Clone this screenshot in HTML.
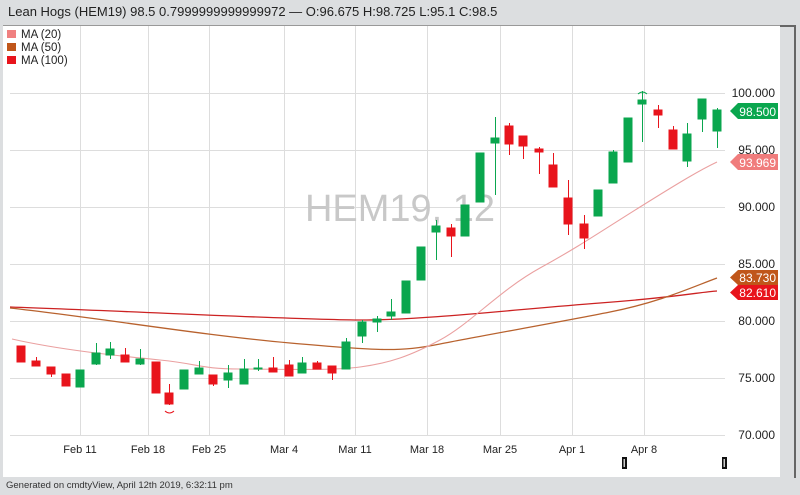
<!DOCTYPE html>
<html><head><meta charset="utf-8"><style>
body{margin:0;width:800px;height:495px;background:#dcdee0;font-family:"Liberation Sans",sans-serif;overflow:hidden;position:relative}
.t{position:absolute;left:8px;top:4px;font-size:13px;color:#222}
.f{position:absolute;left:6px;top:480px;font-size:9.5px;color:#333}
.p{position:absolute;left:3px;top:25px;width:777px;height:451px;background:#fff;border-top:1px solid #999}
.s{position:absolute;left:780px;top:25px;width:14px;height:451px;background:#dcdee0;border-right:2px solid #666;border-top:2px solid #666}
svg{position:absolute;left:0;top:0}
</style></head><body>
<div class="t">Lean Hogs (HEM19) 98.5 0.7999999999999972 — O:96.675 H:98.725 L:95.1 C:98.5</div>
<div class="p"></div><div class="s"></div>
<div class="f">Generated on cmdtyView, April 12th 2019, 6:32:11 pm</div>
<svg width="800" height="495" font-family="Liberation Sans, sans-serif">
<g stroke="#ddd" stroke-width="1">
<line x1="80.5" y1="26" x2="80.5" y2="435"/><line x1="148.5" y1="26" x2="148.5" y2="435"/><line x1="209.5" y1="26" x2="209.5" y2="435"/><line x1="284.5" y1="26" x2="284.5" y2="435"/><line x1="355.5" y1="26" x2="355.5" y2="435"/><line x1="427.5" y1="26" x2="427.5" y2="435"/><line x1="500.5" y1="26" x2="500.5" y2="435"/><line x1="572.5" y1="26" x2="572.5" y2="435"/><line x1="644.5" y1="26" x2="644.5" y2="435"/>
<line x1="10" y1="93.5" x2="725" y2="93.5"/><line x1="10" y1="150.5" x2="725" y2="150.5"/><line x1="10" y1="207.5" x2="725" y2="207.5"/><line x1="10" y1="264.5" x2="725" y2="264.5"/><line x1="10" y1="321.5" x2="725" y2="321.5"/><line x1="10" y1="378.5" x2="725" y2="378.5"/><line x1="10" y1="435.5" x2="725" y2="435.5"/>
</g>
<text x="400" y="221" font-size="38" fill="#c8c8c8" text-anchor="middle">HEM19, 12</text>
<g font-size="12" fill="#222" text-anchor="end">
<text x="775" y="97">100.000</text><text x="775" y="154">95.000</text><text x="775" y="211">90.000</text><text x="775" y="268">85.000</text><text x="775" y="325">80.000</text><text x="775" y="382">75.000</text><text x="775" y="439">70.000</text>
</g>
<g font-size="11" fill="#222" text-anchor="middle">
<text x="80" y="453">Feb 11</text><text x="148" y="453">Feb 18</text><text x="209" y="453">Feb 25</text><text x="284" y="453">Mar 4</text><text x="355" y="453">Mar 11</text><text x="427" y="453">Mar 18</text><text x="500" y="453">Mar 25</text><text x="572" y="453">Apr 1</text><text x="644" y="453">Apr 8</text>
</g>
<rect x="622" y="457" width="5" height="12" fill="#111"/><rect x="623.5" y="459" width="1.5" height="8" fill="#ccc"/>
<rect x="722" y="457" width="5" height="12" fill="#111"/><rect x="723.5" y="459" width="1.5" height="8" fill="#ccc"/>
<g fill="none" stroke-width="1.3">
<path d="M10,307 C150,312 300,320 362,320 S520,309 600,303 S700,292 717,291" stroke="#cc2222"/>
<path d="M10,308 C100,318 200,335 290,343 S400,352 440,344 S560,322 610,312 S690,288 717,278" stroke="#b8622e"/>
<path d="M12,339 C60,350 120,356 160,360 S200,369 240,369 S330,371 360,367 S410,356 440,340 S500,290 540,268 S600,232 640,207 S700,170 717,162" stroke="#eaa0a0" stroke-width="1.1"/>
</g>
<g stroke-width="1">
<g stroke="#e8141c" fill="#e8141c">
<rect x="17" y="346" width="8" height="16"/>
<line x1="36.5" y1="357" x2="36.5" y2="366"/><rect x="32" y="361" width="8" height="5"/>
<line x1="51.5" y1="367" x2="51.5" y2="377"/><rect x="47" y="367" width="8" height="7"/>
<rect x="62" y="374" width="8" height="12"/>
<line x1="125.5" y1="348" x2="125.5" y2="362"/><rect x="121" y="355" width="8" height="7"/>
<rect x="152" y="362" width="8" height="31"/>
<line x1="169.5" y1="384" x2="169.5" y2="405"/><rect x="165" y="393" width="8" height="11"/>
<line x1="213.5" y1="375" x2="213.5" y2="386"/><rect x="209" y="375" width="8" height="9"/>
<line x1="273.5" y1="357" x2="273.5" y2="372"/><rect x="269" y="368" width="8" height="4"/>
<line x1="289.5" y1="360" x2="289.5" y2="376"/><rect x="285" y="365" width="8" height="11"/>
<line x1="317.5" y1="361" x2="317.5" y2="369"/><rect x="313" y="363" width="8" height="6"/>
<line x1="332.5" y1="366" x2="332.5" y2="380"/><rect x="328" y="366" width="8" height="7"/>
<line x1="451.5" y1="224" x2="451.5" y2="257"/><rect x="447" y="228" width="8" height="8"/>
<line x1="509.5" y1="123" x2="509.5" y2="155"/><rect x="505" y="126" width="8" height="18"/>
<line x1="523.5" y1="136" x2="523.5" y2="159"/><rect x="519" y="136" width="8" height="10"/>
<line x1="539.5" y1="147" x2="539.5" y2="174"/><rect x="535" y="149" width="8" height="3"/>
<line x1="553.5" y1="153" x2="553.5" y2="187"/><rect x="549" y="165" width="8" height="22"/>
<line x1="568.5" y1="180" x2="568.5" y2="235"/><rect x="564" y="198" width="8" height="26"/>
<line x1="584.5" y1="215" x2="584.5" y2="249"/><rect x="580" y="224" width="8" height="14"/>
<line x1="658.5" y1="105" x2="658.5" y2="128"/><rect x="654" y="110" width="8" height="5"/>
<line x1="673.5" y1="126" x2="673.5" y2="149"/><rect x="669" y="130" width="8" height="19"/>
</g>
<g stroke="#0aa64e" fill="#0aa64e">
<rect x="76" y="370" width="8" height="17"/>
<line x1="96.5" y1="343" x2="96.5" y2="365"/><rect x="92" y="353" width="8" height="11"/>
<line x1="110.5" y1="342" x2="110.5" y2="359"/><rect x="106" y="349" width="8" height="6"/>
<line x1="140.5" y1="349" x2="140.5" y2="365"/><rect x="136" y="359" width="8" height="5"/>
<rect x="180" y="370" width="8" height="19"/>
<line x1="199.5" y1="361" x2="199.5" y2="374"/><rect x="195" y="368" width="8" height="6"/>
<line x1="228.5" y1="365" x2="228.5" y2="388"/><rect x="224" y="373" width="8" height="7"/>
<line x1="244.5" y1="359" x2="244.5" y2="384"/><rect x="240" y="369" width="8" height="15"/>
<line x1="258.5" y1="359" x2="258.5" y2="371"/><rect x="254" y="368" width="8" height="1"/>
<line x1="302.5" y1="357" x2="302.5" y2="373"/><rect x="298" y="363" width="8" height="10"/>
<line x1="346.5" y1="338" x2="346.5" y2="369"/><rect x="342" y="342" width="8" height="27"/>
<line x1="362.5" y1="320" x2="362.5" y2="343"/><rect x="358" y="322" width="8" height="14"/>
<line x1="377.5" y1="316" x2="377.5" y2="332"/><rect x="373" y="319" width="8" height="3"/>
<line x1="391.5" y1="299" x2="391.5" y2="320"/><rect x="387" y="312" width="8" height="4"/>
<rect x="402" y="281" width="8" height="32"/>
<rect x="417" y="247" width="8" height="33"/>
<line x1="436.5" y1="220" x2="436.5" y2="260"/><rect x="432" y="226" width="8" height="6"/>
<rect x="461" y="205" width="8" height="31"/>
<rect x="476" y="153" width="8" height="49"/>
<line x1="495.5" y1="117" x2="495.5" y2="195"/><rect x="491" y="138" width="8" height="5"/>
<rect x="594" y="190" width="8" height="26"/>
<line x1="613.5" y1="150" x2="613.5" y2="183"/><rect x="609" y="152" width="8" height="31"/>
<rect x="624" y="118" width="8" height="44"/>
<line x1="642.5" y1="91" x2="642.5" y2="142"/><rect x="638" y="100" width="8" height="4"/>
<line x1="687.5" y1="123" x2="687.5" y2="167"/><rect x="683" y="134" width="8" height="27"/>
<line x1="702.5" y1="99" x2="702.5" y2="132"/><rect x="698" y="99" width="8" height="20"/>
<line x1="717.5" y1="108" x2="717.5" y2="148"/><rect x="713" y="110" width="8" height="21"/>
</g>
<path d="M165,411 q4.5,4 9,0" stroke="#e8141c" fill="none"/>
<path d="M638,94 q4.5,-4 9,0" stroke="#0aa64e" fill="none"/>
</g>
<g font-size="12" fill="#fff" text-anchor="end">
<path d="M738,103 h40 v16 h-40 l-8,-8 z" fill="#0aa64e"/><text x="776" y="116">98.500</text>
<path d="M738,154 h40 v16 h-40 l-8,-8 z" fill="#f07c7c"/><text x="776" y="167">93.969</text>
<path d="M738,270 h40 v15 h-40 l-8,-7.5 z" fill="#c0561a"/><text x="776" y="282">83.730</text>
<path d="M738,285 h40 v15 h-40 l-8,-7.5 z" fill="#e8141c"/><text x="776" y="297">82.610</text>
</g>
<g font-size="11.5" fill="#222">
<rect x="7" y="30" width="9" height="8" fill="#f08080"/><text x="21" y="38">MA (20)</text>
<rect x="7" y="43" width="9" height="8" fill="#c0561a"/><text x="21" y="51">MA (50)</text>
<rect x="7" y="56" width="9" height="8" fill="#e8141c"/><text x="21" y="64">MA (100)</text>
</g>
</svg>
</body></html>
